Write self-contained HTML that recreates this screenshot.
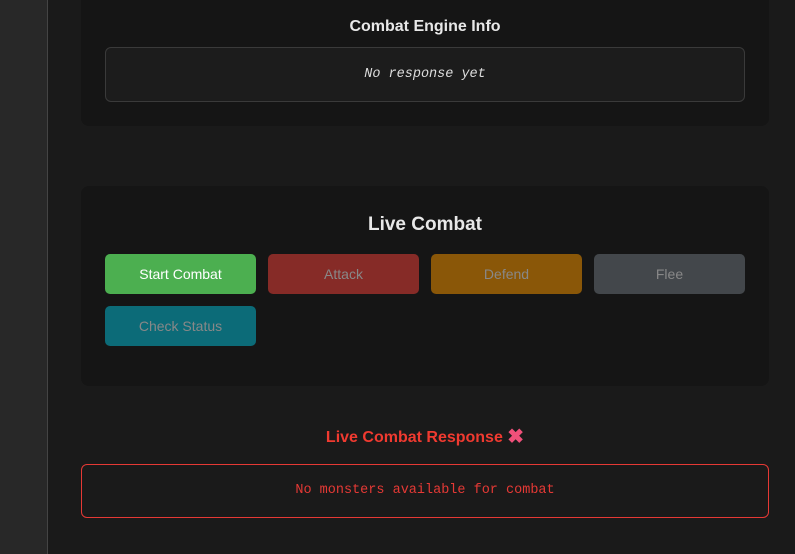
<!DOCTYPE html>
<html><head><style>
*{box-sizing:border-box;margin:0;padding:0}
body{width:795px;height:554px;background:#1a1a1a;font-family:"Liberation Sans",sans-serif;position:relative;overflow:hidden}
.side{position:absolute;left:0;top:0;width:48px;height:554px;background:#282828;border-right:1px solid #444}
.card{position:absolute;left:81px;width:688px;background:#151515;border-radius:8px}
h3{color:#e8e8e8;text-align:center;font-weight:bold}
.box{position:absolute;border-radius:6px;font-family:"Liberation Mono",monospace;font-size:13.5px;text-align:center}
.btn{position:absolute;width:151px;height:40px;border-radius:5px;font-size:14px;text-align:center;line-height:40px}
</style></head><body>
<div class="side"></div>
<div class="card" style="top:-10px;height:136px">
<h3 style="font-size:16px;position:absolute;top:28px;width:100%">Combat Engine Info</h3>
<div class="box" style="left:24px;top:57px;width:640px;height:55px;border:1px solid #3a3a3a;background:#1c1c1c;color:#ddd;font-style:italic;line-height:53px">No response yet</div>
</div>
<div class="card" style="top:186px;height:200px">
<h3 style="font-size:19px;position:absolute;top:28px;width:100%">Live Combat</h3>
<div class="btn" style="left:24px;top:68px;background:#4caf50;color:#fff">Start Combat</div>
<div class="btn" style="left:187px;top:68px;background:#862b27;color:#888">Attack</div>
<div class="btn" style="left:350px;top:68px;background:#8a5708;color:#888">Defend</div>
<div class="btn" style="left:513px;top:68px;background:#43474b;color:#888">Flee</div>
<div class="btn" style="left:24px;top:120px;background:#0c6b78;color:#888">Check Status</div>
</div>
<h3 style="position:absolute;top:429px;left:81px;width:688px;font-size:16px;color:#f03a30">Live Combat Response <span style="color:#f0507a;font-size:20px;line-height:16px;vertical-align:-1px">✖</span></h3>
<div class="box" style="left:81px;top:464px;width:688px;height:54px;border:1px solid #e53935;background:#1a1a1a;color:#e53935;line-height:52px">No monsters available for combat</div>
</body></html>
